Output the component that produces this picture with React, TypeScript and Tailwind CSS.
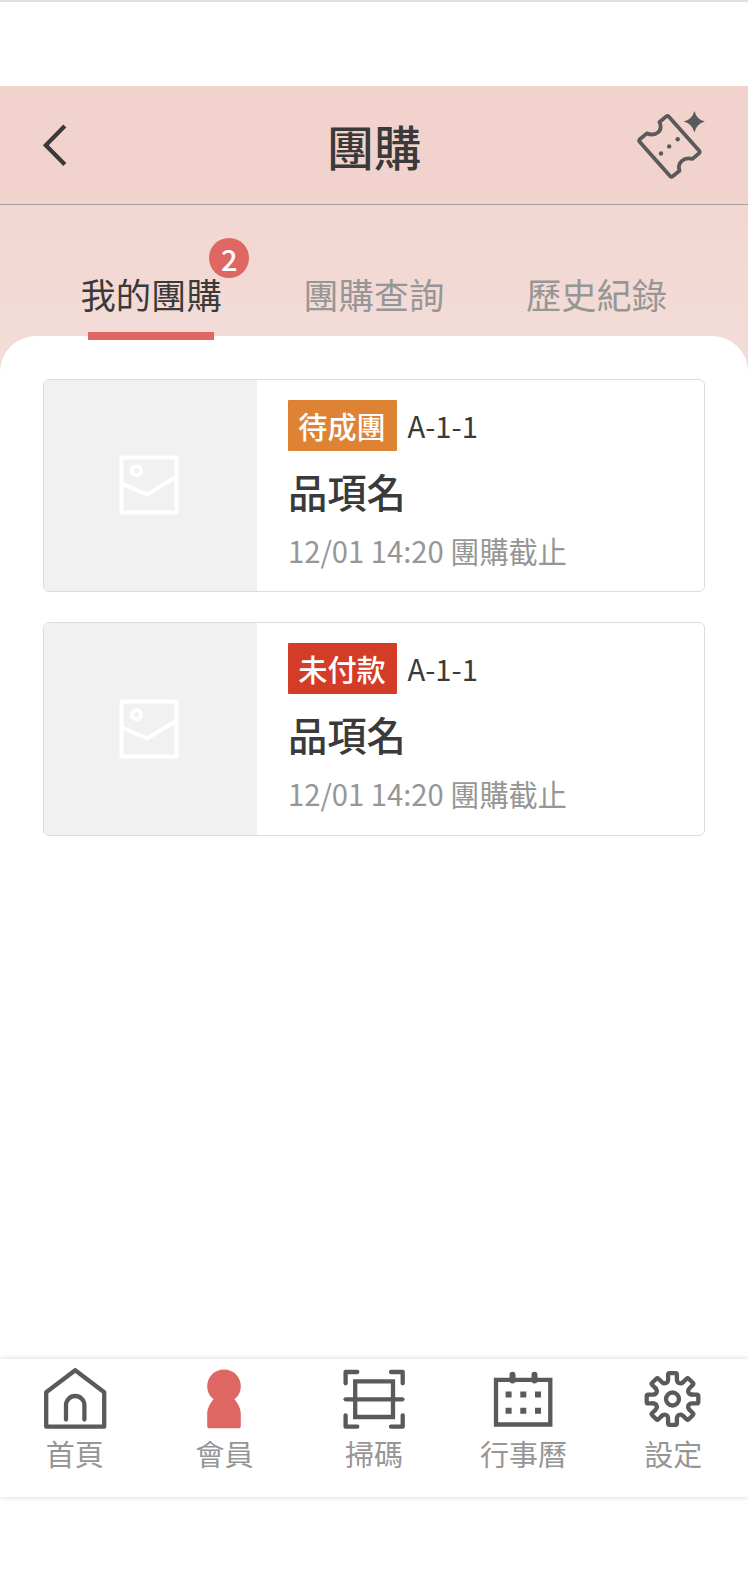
import type { ReactNode } from "react";

const tabs = [
  { label: "我的團購", count: 2, active: true },
  { label: "團購查詢", count: 0, active: false },
  { label: "歷史紀錄", count: 0, active: false },
];

const orders = [
  {
    status: "待成團",
    statusClass: "bg-[#de8334]",
    code: "A-1-1",
    name: "品項名",
    deadline: "12/01 14:20 團購截止",
  },
  {
    status: "未付款",
    statusClass: "bg-[#d33c26]",
    code: "A-1-1",
    name: "品項名",
    deadline: "12/01 14:20 團購截止",
  },
];

function NavIcon({ children }: { children: ReactNode }) {
  return (
    <svg
      width="64"
      height="64"
      viewBox="0 0 64 64"
      fill="none"
      stroke="#595a5a"
      strokeWidth="4.3"
      strokeLinecap="round"
      strokeLinejoin="round"
    >
      {children}
    </svg>
  );
}

function HomeIcon() {
  return (
    <NavIcon>
      <path d="M3.2 26.3 32.2 4.3l29 22V60.7H3.2Z" />
      <path d="M23 53.5V39.2a9.2 9.2 0 0 1 18.4 0V53.5" />
    </NavIcon>
  );
}

function MemberIcon() {
  return (
    <NavIcon>
      <g fill="#de6764" stroke="none">
        <circle cx="32" cy="20.2" r="16.8" />
        <path d="M21 31h22l-.6 2.2c3.6 3.8 6.4 9.3 6.4 14.8v12.3a2 2 0 0 1-2 2H17.2a2 2 0 0 1-2-2V48c0-5.5 2.8-11 6.4-14.8Z" />
      </g>
    </NavIcon>
  );
}

function ScanIcon() {
  return (
    <NavIcon>
      <path d="M3.6 17.3V6H15.3M49 6H60.7V17.3M60.7 49.3V60.7H49M15.3 60.7H3.6V49.3" />
      <path d="M13.2 15.3H51V51H13.2Z" strokeLinejoin="miter" />
      <path d="M3.6 33.3H60.4" />
    </NavIcon>
  );
}

function CalendarIcon() {
  return (
    <NavIcon>
      <g transform="translate(-1 -0.2)">
        <path d="M5 14H59.3V58.7H5Z" strokeLinejoin="miter" />
        <path d="M21.5 9v5.7M43.5 9v5.7" strokeWidth="6" />
        <path
          d="M14.6 25.7h6v6h-6ZM29.3 25.7h6v6h-6ZM44 25.7h6v6h-6ZM14.6 42h6v6h-6ZM29.3 42h6v6h-6ZM44 42h6v6h-6Z"
          fill="#595a5a"
          stroke="none"
        />
      </g>
    </NavIcon>
  );
}

// One tooth and the valley after it, repeated every 45 degrees
const toothAngles = [0, 45, 90, 135, 180, 225, 270, 315];

function SettingsIcon() {
  return (
    <NavIcon>
      <g transform="translate(31.5 33)">
        <circle r="6.5" />
        {toothAngles.map((angle) => (
          <path
            key={angle}
            d="M-4.4-19.5V-24.3Q-4.4-25.8-2.9-25.8H2.9Q4.4-25.8 4.4-24.3V-19.5C4.6-15.8 7.93-14.43 10.68-16.9"
            transform={`rotate(${angle})`}
          />
        ))}
      </g>
    </NavIcon>
  );
}

function TicketIcon() {
  return (
    <svg
      width="70"
      height="70"
      viewBox="16 10 70 70"
      fill="none"
      stroke="#595a5a"
      strokeWidth="3.8"
      strokeLinecap="round"
      strokeLinejoin="round"
    >
      <path d="M39.5 22 46 16.6Q47.7 15.2 49.1 16.9L79 50.6Q80.3 52.1 78.8 53.5L72.5 58.9C64 56.6 57 62.5 59.5 70.8L52.8 76.2Q51.3 77.4 50 75.9L19.8 42Q18.4 40.5 19.9 39.2L26.8 33.4C36 36.8 43.4 31 39.5 22Z" />
      <g fill="#595a5a" stroke="none">
        <circle cx="57.7" cy="39.2" r="2.2" />
        <circle cx="49.2" cy="46.4" r="2.2" />
        <circle cx="41" cy="53.5" r="2.2" />
        <path d="M74.4 11Q76.6 19.4 84.8 21.6Q76.6 23.8 74.4 32.4Q72.2 23.8 63.8 21.6Q72.2 19.4 74.4 11Z" />
      </g>
    </svg>
  );
}

function ImagePlaceholder() {
  return (
    <div className="flex w-[213px] items-center justify-center bg-[#f1f1f1] pr-[2px]">
      <svg
        width="60"
        height="60"
        viewBox="0 0 60 60"
        fill="none"
        stroke="#ffffff"
        strokeWidth="4"
        strokeLinejoin="round"
      >
        <path d="M2.5 2.5H57.5V57.5H2.5Z" />
        <circle cx="17.5" cy="15.7" r="4.5" />
        <path d="M3 28.5 28 39.5 57 22" strokeLinejoin="miter" />
      </svg>
    </div>
  );
}

const navItems = [
  { label: "首頁", icon: <HomeIcon /> },
  { label: "會員", icon: <MemberIcon /> },
  { label: "掃碼", icon: <ScanIcon /> },
  { label: "行事曆", icon: <CalendarIcon /> },
  { label: "設定", icon: <SettingsIcon /> },
];

export default function App() {
  return (
    <div className="flex h-[1572px] w-[748px] flex-col overflow-hidden border-t-2 border-[#e0e0e0] bg-white font-['Noto_Sans_CJK_TC',sans-serif] text-[#3a3a3a]">
      {/* Header */}
      <header className="mt-[84px] flex h-[119px] shrink-0 items-center justify-between border-b border-[#a5a0a0] bg-[#f1d2cd] px-[42px]">
        <div className="w-[70px]">
          <svg width="26" height="42" viewBox="0 0 26 42" fill="none" stroke="#3a3a3a" strokeWidth="4.2">
            <path d="M22.8 2 3.8 21.2 22.8 40.5" />
          </svg>
        </div>
        <h1 className="pt-[2px] text-[47.3px] leading-[60px] font-medium">團購</h1>
        <TicketIcon />
      </header>

      <div className="shrink-0 bg-[linear-gradient(to_bottom,#f2d6d1_0px,#f3ddd9_170px)]">
        {/* Tabs */}
        <nav className="flex h-[131px] gap-[81.5px] pl-[80.5px]">
          {tabs.map((tab) => (
            <div key={tab.label} className="relative flex h-[135px] flex-col items-center justify-end">
              <span
                className={
                  tab.active
                    ? "mb-[13px] text-[35.3px] leading-[50px]"
                    : "mb-[21px] text-[35.3px] leading-[50px] text-[#969696]"
                }
              >
                {tab.label}
              </span>
              {tab.active && <span className="z-10 h-2 w-[126px] bg-[#de6764]" />}
              {tab.count > 0 && (
                <span className="absolute top-[33px] -right-[27.5px] flex size-10 items-center justify-center rounded-full bg-[#de6764] text-[29px] leading-10 font-medium text-white">
                  {tab.count}
                </span>
              )}
            </div>
          ))}
        </nav>

        {/* Order list */}
        <main className="flex flex-col gap-[30px] rounded-t-[36px] bg-white pt-[42.5px] pr-[43px] pl-[42.5px]">
          {orders.map((order) => (
            <article
              key={order.status}
              className="flex h-[213.5px] overflow-hidden rounded-[6px] border border-[#dcdcdc]"
            >
              <ImagePlaceholder />
              <div className="flex flex-col items-start pt-[20px] pl-[31.5px]">
                <div className="flex items-center gap-[10.5px]">
                  <span
                    className={`${order.statusClass} flex h-[51px] w-[109px] items-center justify-center rounded-[1px] pr-[1px] text-[29.2px] leading-[51px] font-medium text-white`}
                  >
                    {order.status}
                  </span>
                  <span className="text-[29.2px] leading-[51px]">{order.code}</span>
                </div>
                <h2 className="mt-[12px] text-[39.3px] leading-[56px] font-medium">{order.name}</h2>
                <p className="mt-[10px] text-[29.2px] leading-[42px] text-[#969696]">{order.deadline}</p>
              </div>
            </article>
          ))}
        </main>
      </div>

      {/* Bottom navigation */}
      <footer className="mt-auto mb-[75px] grid h-[138px] shrink-0 grid-cols-5 bg-white shadow-[0_0_6px_rgba(0,0,0,0.16)]">
        {navItems.map((item) => (
          <div key={item.label} className="flex flex-col items-center pt-[7px]">
            {item.icon}
            <span className="mt-[3px] text-[29px] leading-[40px] text-[#969696]">{item.label}</span>
          </div>
        ))}
      </footer>
    </div>
  );
}
